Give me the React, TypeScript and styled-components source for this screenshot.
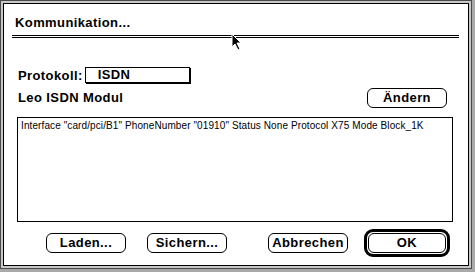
import React from "react";
import styled, { createGlobalStyle } from "styled-components";

const Global = createGlobalStyle`
  html, body { margin: 0; padding: 0; background: #a9a9a9; }
  #root { width: 475px; height: 272px; }
`;

const Desktop = styled.div`
  position: relative;
  width: 475px;
  height: 272px;
  overflow: hidden;
  background: #a9a9a9;
`;

const Frame = styled.div`
  box-sizing: border-box;
  width: 472px;
  height: 269px;
  border: 1px solid #4a4a4a;
  background: #c8c8c8;
  padding: 2px;
`;

const Panel = styled.div`
  box-sizing: border-box;
  height: 100%;
  border: 1px solid #000;
  background: #fff;
  display: flex;
  flex-direction: column;
  font-family: "Liberation Sans", Arial, sans-serif;
  color: #000;
`;

const chicago = `
  font-family: "Liberation Sans", Arial, sans-serif;
  font-weight: bold;
  font-size: 13px;
  letter-spacing: 0.4px;
  line-height: 14px;
`;

const Title = styled.div`
  ${chicago}
  padding: 12px 0 0 11px;
  height: 14px;
`;

const Divider = styled.div`
  box-sizing: border-box;
  margin: 5px 0 0 8px;
  width: 447px;
  height: 3px;
  border-top: 1px solid #000;
  border-bottom: 1px solid #000;
`;

const Body = styled.div`
  display: flex;
  flex-direction: column;
  padding-left: 13px;
`;

const ProtoRow = styled.div`
  display: flex;
  align-items: center;
  margin-top: 29px;
  height: 17px;
`;

const Label = styled.span`
  ${chicago}
  margin-left: 1px;
  white-space: nowrap;
`;

const Popup = styled.div`
  ${chicago}
  box-sizing: border-box;
  margin-left: 2px;
  margin-top: -1px;
  width: 105px;
  height: 16px;
  border: 1px solid #000;
  box-shadow: 1px 1px 0 #000;
  padding-left: 12px;
`;

const ModulRow = styled.div`
  display: flex;
  align-items: center;
  justify-content: space-between;
  width: 430px;
  height: 20px;
  margin-top: 4px;
`;

const Button = styled.div<{ $w?: number; $ml?: number }>`
  ${chicago}
  box-sizing: border-box;
  width: ${(p) => p.$w ?? 80}px;
  height: 20px;
  margin-left: ${(p) => p.$ml ?? 0}px;
  border: 1px solid #000;
  border-radius: 6px;
  background: #fff;
  display: flex;
  align-items: center;
  justify-content: center;
  line-height: 18px;
`;

const TextBox = styled.div`
  box-sizing: border-box;
  margin-top: 9px;
  width: 436px;
  height: 105px;
  border: 1px solid #000;
  padding: 2px 0 0 3px;
  font-family: "Liberation Sans", Arial, sans-serif;
  font-size: 10px;
  letter-spacing: 0.1px;
  line-height: 12px;
  white-space: nowrap;
`;

const ButtonRow = styled.div`
  display: flex;
  align-items: center;
  margin-top: 7px;
  padding-left: 29px;
  height: 28px;
`;

const DefaultRing = styled.div<{ $ml: number }>`
  box-sizing: border-box;
  margin-left: ${(p) => p.$ml}px;
  border: 3px solid #000;
  border-radius: 9px;
  padding: 1px;
  display: flex;
`;

const Cursor = styled.svg`
  position: absolute;
  left: 231px;
  top: 33px;
`;

export default function App() {
  return (
    <Desktop>
      <Global />
      <Frame>
        <Panel>
          <Title>Kommunikation...</Title>
          <Divider />
          <Body>
            <ProtoRow>
              <Label>Protokoll:</Label>
              <Popup>ISDN</Popup>
            </ProtoRow>
            <ModulRow>
              <Label>Leo ISDN Modul</Label>
              <Button>Ändern</Button>
            </ModulRow>
            <TextBox>
              Interface "card/pci/B1" PhoneNumber "01910" Status None Protocol X75 Mode Block_1K
            </TextBox>
            <ButtonRow>
              <Button>Laden...</Button>
              <Button $ml={21}>Sichern...</Button>
              <Button $ml={41}>Abbrechen</Button>
              <DefaultRing $ml={16}>
                <Button $w={78}>OK</Button>
              </DefaultRing>
            </ButtonRow>
          </Body>
        </Panel>
      </Frame>
      <Cursor width="12" height="18" viewBox="0 0 12 18">
        <path
          d="M1 1 L1 14 L4 11 L7 17 L9 16 L6 10 L10 10 Z"
          fill="#000"
          stroke="#fff"
          strokeWidth="1"
          strokeLinejoin="miter"
        />
      </Cursor>
    </Desktop>
  );
}
